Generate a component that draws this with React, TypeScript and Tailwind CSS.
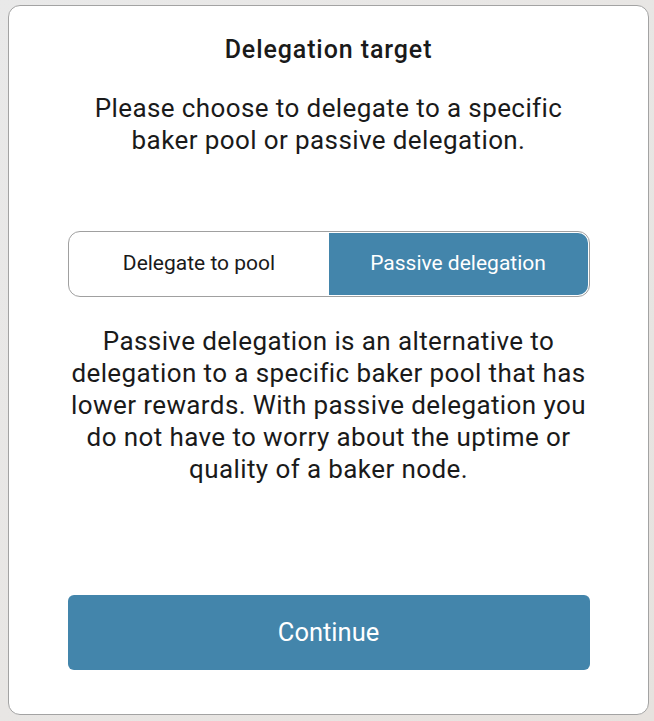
export default function App() {
  return (
    <div className="h-[721px] w-[654px] bg-gradient-to-br from-[#e9e9e9] via-[#e8e6e4] to-[#e6e2de] pt-[5px] pl-[8px] font-['Roboto','Liberation_Sans',sans-serif] text-[#1a1a1a]">
      <div className="flex h-[710px] w-[641px] flex-col items-center rounded-[12px] border border-[#a3a3a3] bg-white px-[59px] pt-[29px]">
        <h1 className="text-[25px] leading-[30px] font-medium tracking-[0.9px]">Delegation target</h1>
        <p className="mt-[27px] text-center text-[26px] leading-[32px] tracking-[0.4px]">
          Please choose to delegate to a specific
          <br />
          baker pool or passive delegation.
        </p>

        <div className="mt-[75px] flex h-[66px] w-[522px] overflow-hidden rounded-[12px] border border-[#a0a0a0] p-[1px]">
          <button className="flex flex-1 items-center justify-center text-[21px] text-[#1a1a1a]">
            Delegate to pool
          </button>
          <button className="flex flex-1 items-center justify-center rounded-r-[10px] bg-[#4385ab] text-[21px] text-white">
            Passive delegation
          </button>
        </div>

        <p className="mt-[28px] text-center text-[26px] leading-[32px] tracking-[0.4px]">
          Passive delegation is an alternative to
          <br />
          delegation to a specific baker pool that has
          <br />
          lower rewards. With passive delegation you
          <br />
          do not have to worry about the uptime or
          <br />
          quality of a baker node.
        </p>

        <button className="mt-auto mb-[44px] h-[75px] w-[522px] rounded-[6px] bg-[#4385ab] text-[25.5px] text-white">
          Continue
        </button>
      </div>
    </div>
  );
}
